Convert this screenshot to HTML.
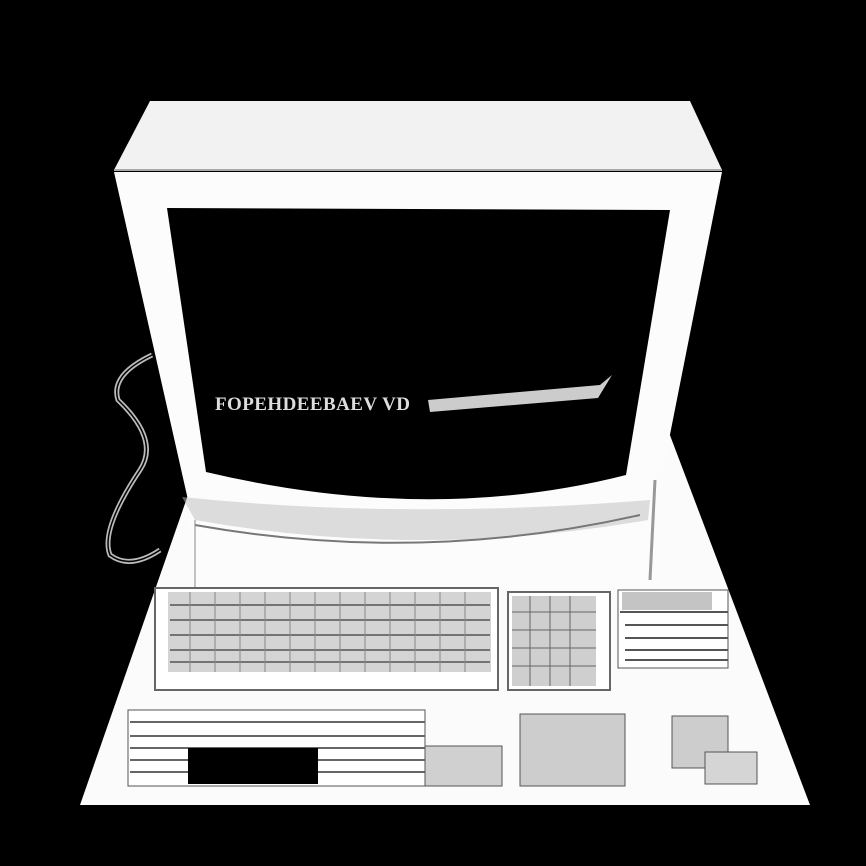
<!DOCTYPE html><html><head><style>body{margin:0;background:#000}svg{display:block}</style></head><body>
<svg width="866" height="866" viewBox="0 0 866 866" xmlns="http://www.w3.org/2000/svg">
<rect width="866" height="866" fill="#000"/>
<polygon points="188,495 668,430 810,805 80,805" fill="#fbfbfb"/>
<polygon points="150,101 690,101 722,170 114,170" fill="#f2f2f2"/>
<line x1="114" y1="170" x2="722" y2="170" stroke="#aaa" stroke-width="2"/>
<polygon points="114,172 722,172 660,485 662,590 195,590 188,500" fill="#fcfcfc"/>
<path d="M167,208 L670,210 L626,475 Q430,525 206,472 Z" fill="#000"/>
<path d="M182,497 Q400,520 650,500 L648,520 Q420,560 195,520 Z" fill="#bbb" opacity=".5"/>
<path d="M195,525 Q420,565 640,515" stroke="#777" stroke-width="2" fill="none"/>
<line x1="195" y1="520" x2="195" y2="590" stroke="#888"/>
<line x1="655" y1="480" x2="650" y2="580" stroke="#999" stroke-width="3"/>
<path d="M152,355 Q110,375 118,400 Q160,440 140,470 Q100,530 110,555 Q130,570 160,550" stroke="#bbb" stroke-width="5" fill="none"/>
<path d="M152,355 Q110,375 118,400 Q160,440 140,470 Q100,530 110,555 Q130,570 160,550" stroke="#000" stroke-width="1.5" fill="none"/>
<text x="215" y="410" fill="#ddd" font-family="Liberation Serif,serif" font-size="19" font-weight="bold" textLength="195">FOPEHDEEBAEV VD</text>
<path d="M428,400 L600,385 L612,375 L598,398 L430,412 Z" fill="#ccc"/>
<rect x="155" y="588" width="343" height="102" fill="#fff" stroke="#666" stroke-width="2"/>
<rect x="168" y="592" width="323" height="80" fill="#d4d4d4"/>
<g stroke="#555" stroke-width="1.5" fill="none">
<path d="M170,605H490M170,620H490M170,635H490M170,650H490M170,662H490"/>
<path d="M190,592V672M215,592V672M240,592V672M265,592V672M290,592V672M315,592V672M340,592V672M365,592V672M390,592V672M415,592V672M440,592V672M465,592V672" stroke="#888" stroke-width="1"/>
</g>
<rect x="508" y="592" width="102" height="98" fill="#fff" stroke="#666" stroke-width="2"/>
<rect x="512" y="596" width="84" height="90" fill="#cfcfcf"/>
<g stroke="#666"><path d="M512,612H596M512,630H596M512,648H596M512,666H596M530,596V686M550,596V686M570,596V686"/></g>
<rect x="618" y="590" width="110" height="78" fill="#fff" stroke="#555"/>
<g stroke="#555" stroke-width="2"><path d="M620,612H728M625,625H728M625,638H728M625,650H728M625,660H728"/></g>
<rect x="622" y="592" width="90" height="18" fill="#c4c4c4"/>
<rect x="128" y="710" width="297" height="76" fill="#fff" stroke="#555"/>
<g stroke="#666" stroke-width="2"><path d="M130,722H425M130,736H425M130,748H425M130,760H425M130,772H425"/></g>
<rect x="188" y="748" width="130" height="36" fill="#000"/>
<rect x="425" y="746" width="77" height="40" fill="#d0d0d0" stroke="#555"/>
<rect x="520" y="714" width="105" height="72" fill="#cdcdcd" stroke="#555"/>
<rect x="672" y="716" width="56" height="52" fill="#cdcdcd" stroke="#555"/>
<rect x="705" y="752" width="52" height="32" fill="#d5d5d5" stroke="#555"/>
</svg>
</body></html>
